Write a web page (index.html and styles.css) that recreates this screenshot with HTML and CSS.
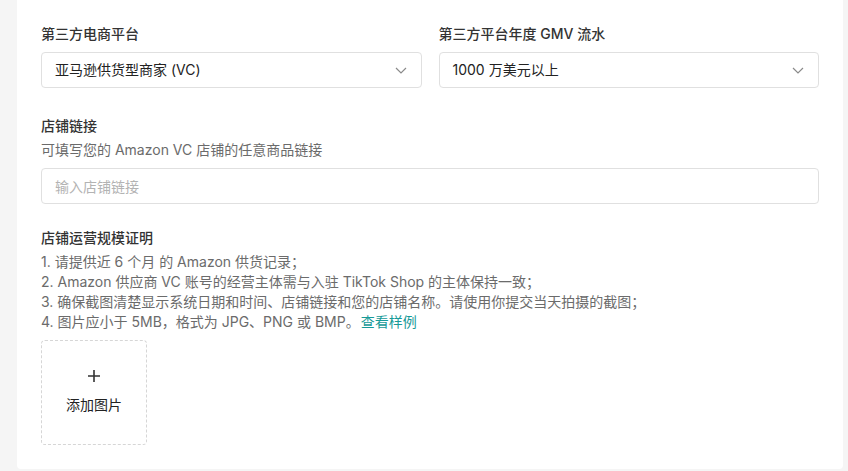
FILE: index.html
```html
<!DOCTYPE html>
<html lang="zh-CN">
<head>
<meta charset="utf-8">
<link rel="stylesheet" href="styles.css">
</head>
<body>
<div class="page">
  <div class="card">
    <div class="row">
      <div class="field">
        <div class="label">第三方电商平台</div>
        <div class="select">
          <span class="value">亚马逊供货型商家 (VC)</span>
          <svg class="chev" width="12" height="7" viewBox="0 0 12 7"><path d="M1 1l5 5 5-5" fill="none" stroke="#8a8a8a" stroke-width="1.2"/></svg>
        </div>
      </div>
      <div class="field">
        <div class="label">第三方平台年度 GMV 流水</div>
        <div class="select">
          <span class="value">1000 万美元以上</span>
          <svg class="chev" width="12" height="7" viewBox="0 0 12 7"><path d="M1 1l5 5 5-5" fill="none" stroke="#8a8a8a" stroke-width="1.2"/></svg>
        </div>
      </div>
    </div>

    <div class="block">
      <div class="label">店铺链接</div>
      <div class="help">可填写您的 Amazon VC 店铺的任意商品链接</div>
      <div class="input"><span class="placeholder">输入店铺链接</span></div>
    </div>

    <div class="block proof">
      <div class="label">店铺运营规模证明</div>
      <ol class="rules">
        <li>1. 请提供近 6 个月 的 Amazon 供货记录；</li>
        <li>2. Amazon 供应商 VC 账号的经营主体需与入驻 TikTok Shop 的主体保持一致；</li>
        <li>3. 确保截图清楚显示系统日期和时间、店铺链接和您的店铺名称。请使用你提交当天拍摄的截图；</li>
        <li>4. 图片应小于 5MB，格式为 JPG、PNG 或 BMP。<a class="link" href="#">查看样例</a></li>
      </ol>
      <div class="upload">
        <svg class="plus" width="14" height="14" viewBox="0 0 14 14"><path d="M7 1v12M1 7h12" stroke="#333" stroke-width="1.6"/></svg>
        <span class="upload-text">添加图片</span>
      </div>
    </div>
  </div>
</div>
</body>
</html>
```

FILE: styles.css
```css
* { box-sizing: border-box; }
html, body { margin: 0; padding: 0; }
body {
  background: #f5f5f5;
  font-family: "Inter", "Noto Sans CJK SC", sans-serif;
  font-size: 14px;
  color: #222;
  height: 471px;
  overflow: hidden;
}
.page {
  padding: 0 5px 2px 17px;
  height: 471px;
  display: flex;
  flex-direction: column;
  justify-content: flex-end;
}
.card {
  background: #fff;
  border-radius: 0 0 4px 4px;
  padding: 24px 24px 24px 24px;
}
.row {
  display: flex;
  gap: 17px;
}
.field { flex: 1; }
.label {
  font-size: 14px;
  line-height: 20px;
  font-weight: 500;
  color: #333;
}
.select {
  margin-top: 8px;
  height: 36px;
  border: 1px solid #e0e0e0;
  border-radius: 4px;
  display: flex;
  align-items: center;
  justify-content: space-between;
  padding: 0 14px 0 13px;
}
.value { line-height: 20px; color: #222; }
.block { margin-top: 28px; }
.help {
  margin-top: 4px;
  line-height: 20px;
  color: #6b6b6b;
}
.input {
  margin-top: 8px;
  height: 36px;
  border: 1px solid #e0e0e0;
  border-radius: 4px;
  display: flex;
  align-items: center;
  padding: 0 13px;
}
.placeholder { color: #b3b3b3; }
.proof { margin-top: 24px; }
.rules {
  list-style: none;
  margin: 4px 0 0;
  padding: 0;
  color: #6b6b6b;
  line-height: 20px;
}
.link { color: #169a98; text-decoration: none; margin-left: 1px; }
.upload {
  margin-top: 8px;
  width: 106px;
  height: 105px;
  border: 1px dashed #d6d6d6;
  border-radius: 4px;
  display: flex;
  flex-direction: column;
  align-items: center;
  justify-content: center;
  gap: 12px;
}
.plus { display: block; margin-top: -2px; }
.upload-text { line-height: 20px; color: #222; }
```
